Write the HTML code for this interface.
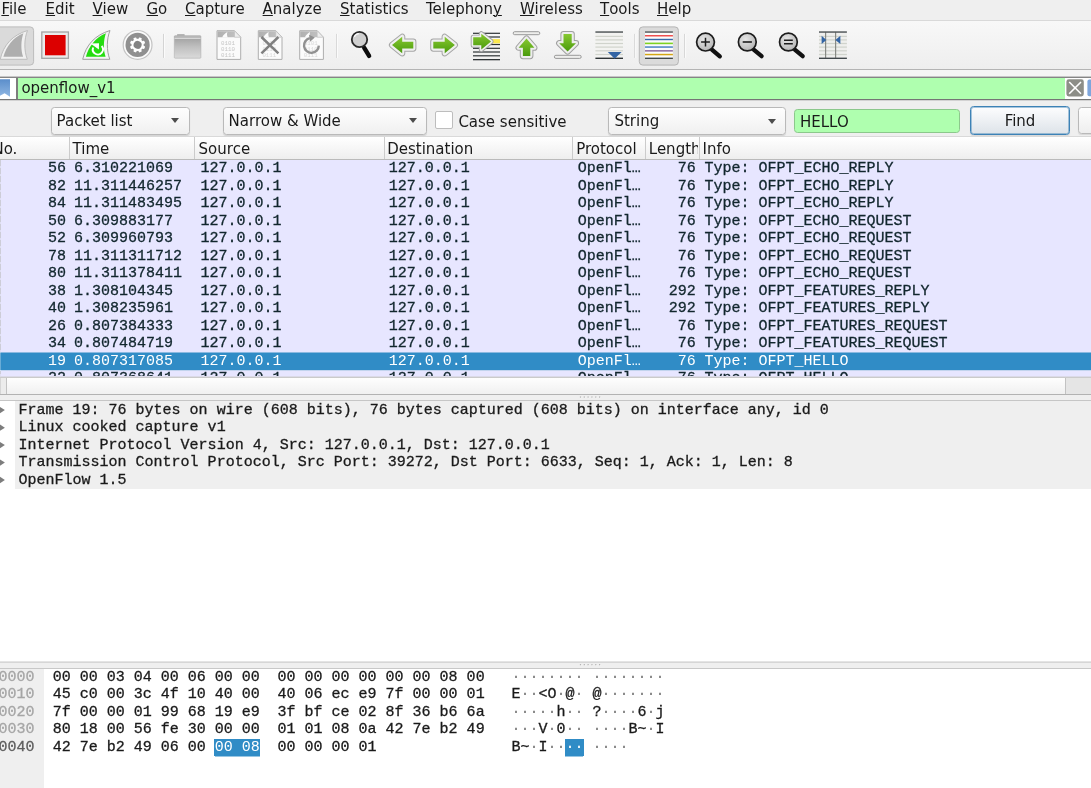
<!DOCTYPE html>
<html lang="en"><head><meta charset="utf-8"><title>Wireshark</title>
<style>
html,body{margin:0;padding:0}
body{width:1091px;height:788px;overflow:hidden;position:relative;background:#fff;
 font-family:"DejaVu Sans","Liberation Sans",sans-serif;font-size:15px;color:#1a1a1a}
.abs{position:absolute}
.r,.d,.h{-webkit-text-stroke:0.3px currentColor}
#menubar{position:absolute;left:0;top:0;width:1091px;height:19.6px;background:#efefef}
#menubar span{position:absolute;top:0;line-height:18px;white-space:nowrap}
#menubar u{text-decoration:underline;text-underline-offset:1.2px;text-decoration-thickness:1.3px}
#toolbar{position:absolute;left:0;top:19.6px;width:1091px;height:50.3px;background:linear-gradient(#f8f8f8,#eeeeee);border-top:1px solid #d9d9d9;border-bottom:1px solid #b4b4b4;box-sizing:border-box}
#tbsvg{position:absolute;left:0;top:0}
#gap1{position:absolute;left:0;top:70px;width:1091px;height:6px;background:#f5f5f5}
#filter{position:absolute;left:0;top:76px;width:1091px;height:25px;background:linear-gradient(#c6c6c6 0 1px,#858585 1px 2px,#afffaf 2px 23px,#757575 23px 24px,#d2d2d2 24px 25px)}
#filter .bm{position:absolute;left:0;top:2px;width:16px;height:21px;background:#fff;border-right:2px solid;border-right-color:#7d7d7d}
#filter .txt{position:absolute;left:21.4px;top:2px;line-height:21.8px;white-space:nowrap}
#filter .fr{position:absolute;left:1065px;top:2px;width:26px;height:21px;background:#fff}
#search{position:absolute;left:0;top:101px;width:1091px;height:36px;background:#efefef}
.combo{position:absolute;box-sizing:border-box;border:1px solid #b9b9b9;border-radius:3.5px;background:linear-gradient(#fefefe,#f0f0f0);box-shadow:0 1px 1px rgba(0,0,0,.12)}
.combo span{position:absolute;left:5px;top:0;white-space:nowrap}
.combo i{position:absolute;width:0;height:0;border-left:4.8px solid transparent;border-right:4.8px solid transparent;border-top:5.2px solid #4d4d4d}
.chk{position:absolute;left:435px;top:10.4px;width:17.6px;height:17.4px;box-sizing:border-box;border:1px solid #bdbdbd;border-radius:2px;background:#fff}
.lbl{position:absolute;white-space:nowrap}
.inp{position:absolute;left:794px;top:8px;width:166px;height:24px;box-sizing:border-box;border:1px solid #8cc88c;border-radius:3.5px;background:#afffaf}
.inp span{position:absolute;left:5px;top:0;line-height:24.8px}
.btn{position:absolute;box-sizing:border-box;border:1px solid #b9b9b9;border-radius:3.5px;background:linear-gradient(#fefefe,#eeeeee);box-shadow:0 1px 1px rgba(0,0,0,.10)}
.btn.focus{border:1px solid #3d82b6;background:linear-gradient(#fdfdfe,#dde3e9);box-shadow:inset 0 0 0 1px rgba(61,130,182,.45),0 1px 1px rgba(0,0,0,.10)}
.btn span{position:absolute;left:0;right:0;top:0;text-align:center;line-height:29.2px}
#hdr{position:absolute;left:0;top:136px;width:1091px;height:24px;box-sizing:border-box;background:linear-gradient(#ffffff,#eeeeee);border-top:1px solid #d9d9d9;border-bottom:1px solid #bababa}
#hdr span{position:absolute;top:0;line-height:24.2px;height:22px;white-space:nowrap}
#hdr i{position:absolute;top:0;width:1px;height:22px;background:#cbcbcb}
#plist{position:absolute;left:0;top:160px;width:1091px;height:217px;background:#e7e6ff;overflow:hidden}
.r{position:absolute;left:0;width:1091px;height:17px;color:#12272e;font-family:"Liberation Mono",monospace;font-size:15px;line-height:17px;white-space:pre}
.r.sel{color:#fff;-webkit-text-stroke:0}
#rel{position:absolute;left:0;top:160px;width:1px;height:217px;background:repeating-linear-gradient(#cdcdd8 0 6px,rgba(205,205,216,.3) 6px 8px)}
#selbg{position:absolute;left:0;top:352px;width:1091px;height:19px;background:linear-gradient(#8bb9e0 0 1px,#308cc6 1px 18px,#c2d4ee 18px 19px);box-shadow:inset 1px 0 0 rgba(255,255,255,.28)}
.r .c{position:absolute;top:0}
.no{right:1025px}.tm{left:74px}.src{left:200.4px}.dst{left:388.8px}.pr{left:577.8px}.ln{right:395.3px}.inf{left:704.5px}
#rows{position:absolute;left:0;top:-160px}
#hscroll{position:absolute;left:0;top:376px;width:1091px;height:19px;background:linear-gradient(#dbdae8 0 1px,#cbcbcb 1px 2px,#fefefe 2px,#f0f0f0 18px,#b2b2b2 18px 19px)}
#hscroll .l{position:absolute;left:0;top:2px;width:6px;height:16px;background:linear-gradient(90deg,#d6d6d6 0 1px,#ececec 1px);border-right:1px solid #c2c2c2}
#hscroll .rr{position:absolute;left:1065px;top:2px;width:26px;height:16px;background:#e5e5e5;border-left:1px solid #c2c2c2;box-sizing:border-box}
#split1{position:absolute;left:0;top:395px;width:1091px;height:5px;background:#efefef}
#det{position:absolute;left:0;top:400px;width:1091px;height:262px;background:#fff;border-top:1px solid #c6c6c6;box-sizing:border-box}
.d{position:absolute;left:0;width:1091px;height:17px;font-family:"Liberation Mono",monospace;font-size:15px;line-height:17px;white-space:pre;color:#1a1a1a}
.d span{position:absolute;left:18.6px;top:0}
#detbg{position:absolute;left:15px;top:401px;width:1076px;height:88px;background:#efefef}
#split2{position:absolute;left:0;top:661px;width:1091px;height:8px;background:linear-gradient(#e4e4e4 0 1px,#d6d6d6 1px 2px,#efefef 2px 7px,#c8c8c8 7px 8px)}
#hexp{position:absolute;left:0;top:669px;width:1091px;height:119px;background:#fff}
#hexoff{position:absolute;left:0;top:669px;width:43.6px;height:119px;background:#efefef}
.h{position:absolute;left:0;width:1091px;height:17px;font-family:"Liberation Mono",monospace;font-size:15px;line-height:17px;white-space:pre;color:#1a1a1a}
.h span{position:absolute;top:0}
.h .off{left:-1.5px;color:#a6a6a6}
.h .off.cur{color:#5e5e5e}
.h .hx1{left:52.8px}.h .hx2{left:277.6px}.h .as1{left:511.4px}.h .as2{left:592.4px}
.h b{font-weight:normal;background:#308cc6;color:#fff;-webkit-text-stroke:0;box-shadow:-1px 0 0 #308cc6,0 0.5px 0 #308cc6}
.h .as1 b{box-shadow:1px 0 0 #308cc6,0 0.5px 0 #308cc6}
.h i{font-style:normal;color:#7a7a7a;-webkit-text-stroke:0}
.h b i{color:#fff}
.dots{position:absolute;font-size:0}
#app{position:absolute;left:0;top:0;width:1091px;height:788px;overflow:hidden;will-change:transform}
</style></head><body><div id="app">
<div id="menubar">
<span style="left:1.4px"><u>F</u>ile</span><span style="left:45.6px"><u>E</u>dit</span><span style="left:92.6px"><u>V</u>iew</span><span style="left:146.4px"><u>G</u>o</span><span style="left:185px"><u>C</u>apture</span><span style="left:262.6px"><u>A</u>nalyze</span><span style="left:340px"><u>S</u>tatistics</span><span style="left:426px">Telephon<u>y</u></span><span style="left:520px"><u>W</u>ireless</span><span style="left:600px;font-kerning:none"><u>T</u>ools</span><span style="left:657px"><u>H</u>elp</span>
</div>
<div id="toolbar">
<svg id="tbsvg" width="1091" height="48" viewBox="0 21.1 1091 48">
<defs>
<linearGradient id="gg" x1="0" y1="0" x2="0" y2="1"><stop offset="0" stop-color="#86c830"/><stop offset="1" stop-color="#4a9a0c"/></linearGradient>
<linearGradient id="gh" x1="0" y1="0" x2="1" y2="0"><stop offset="0" stop-color="#7ec42a"/><stop offset="1" stop-color="#56a412"/></linearGradient>
<linearGradient id="fold" x1="0" y1="0" x2="0" y2="1"><stop offset="0" stop-color="#9c9c9c"/><stop offset="0.5" stop-color="#c0c0c0"/><stop offset="1" stop-color="#dadada"/></linearGradient>
<linearGradient id="docg" x1="0" y1="0" x2="1" y2="1"><stop offset="0" stop-color="#b8b8b8"/><stop offset="0.3" stop-color="#f1f1f1"/><stop offset="1" stop-color="#f6f6f6"/></linearGradient>
<linearGradient id="band" x1="0" y1="0" x2="1" y2="0"><stop offset="0" stop-color="#b0b0b0"/><stop offset="1" stop-color="#c4c4c4"/></linearGradient>
<radialGradient id="lens" cx="0.4" cy="0.35" r="0.7"><stop offset="0" stop-color="#e6e6e6"/><stop offset="1" stop-color="#b4b4b4"/></radialGradient>
<g id="doc"><path d="M0.5 0.5 H18 L24.2 7 V29.2 H0.5 Z" fill="#fbfbfb" stroke="#aeaeae" stroke-width="1"/><path d="M1 1 H17.8 L23.6 7 H1 Z" fill="url(#band)"/><path d="M5.6 7.2 C7 4.6 8.6 2.9 10.9 1.8 C10.3 3.8 10.4 5.6 11.3 7.2 Z" fill="#fbfbfb"/><path d="M18 0.6 V7 H24.1 Z" fill="#ededed" stroke="#bdbdbd" stroke-width="0.6" stroke-linejoin="round"/></g>
<g id="mag"><line x1="6.4" y1="7.6" x2="14.3" y2="14.2" stroke="#111" stroke-width="4.3" stroke-linecap="round"/><circle cx="0" cy="0" r="8.9" fill="url(#lens)" stroke="#1c1c1c" stroke-width="1.7"/></g>
</defs>
<!-- shark (pressed) -->
<rect x="-6" y="27" width="39.6" height="38.2" rx="3.5" fill="#dadada" stroke="#bcbcbc" stroke-width="1"/>
<g transform="translate(-82.5 0)"><path d="M82.7 59.4 C86 45 95 35.2 110 30.6 C106.6 39 106.4 50.5 109.8 59.4 Z" fill="#f1f1f1" stroke="#bdbdbd" stroke-width="1" stroke-linejoin="miter"/>
<path d="M85.9 56.8 C88.8 46.5 95.5 37.6 105.9 33.3 C103.4 40.5 103.2 49.8 105.6 56.8 Z" fill="#aeaeae"/></g>
<!-- stop -->
<rect x="41.8" y="32.1" width="26.6" height="26.3" fill="#ebebeb" stroke="#a4a4a4" stroke-width="1.3"/>
<rect x="45" y="35.1" width="20.6" height="20.3" fill="#dc0000"/>
<!-- restart -->
<path d="M82.7 59.4 C86 45 95 35.2 110 30.6 C106.6 39 106.4 50.5 109.8 59.4 Z" fill="#f4f4f4" stroke="#9e9e9e" stroke-width="1" stroke-linejoin="miter"/>
<path d="M85.9 56.8 C88.8 46.5 95.5 37.6 105.9 33.3 C103.4 40.5 103.2 49.8 105.6 56.8 Z" fill="#24dc10"/>
<path d="M101.6 46.1 A5.05 5.05 0 1 1 93.2 47.6" fill="none" stroke="#fff" stroke-width="1.9"/>
<path d="M90.4 43.7 L99 43.4 L98.9 49.6 Z" fill="#fff"/>
<!-- options gear -->
<circle cx="137.6" cy="45" r="14.4" fill="#fbfbfb" stroke="#c4c4c4" stroke-width="1.2"/>
<circle cx="137.6" cy="45" r="12.1" fill="#909090"/>
<g transform="translate(137.6 45) rotate(22.5)" fill="#fff">
<circle r="6.1"/>
<rect x="-1.5" y="-7.7" width="3" height="15.4" rx="0.7"/><rect x="-1.5" y="-7.7" width="3" height="15.4" rx="0.7" transform="rotate(45)"/><rect x="-1.5" y="-7.7" width="3" height="15.4" rx="0.7" transform="rotate(90)"/><rect x="-1.5" y="-7.7" width="3" height="15.4" rx="0.7" transform="rotate(135)"/>
<circle r="4" fill="#838383"/>
</g>
<!-- sep -->
<rect x="163" y="34" width="1" height="24" fill="#d4d4d4"/><rect x="164" y="34" width="1" height="24" fill="#fbfbfb"/>
<!-- folder -->
<path d="M177 36 V34.6 Q177 34.1 177.6 34.1 H184 Q184.6 34.1 184.6 34.6 V36 Z" fill="#b5b5b5"/>
<rect x="174.3" y="35.9" width="26.6" height="22.4" rx="0.8" fill="url(#fold)" stroke="#b0b0b0" stroke-width="0.6"/>
<rect x="174.4" y="35.9" width="26.4" height="2.2" fill="#b6b6b6"/><rect x="174.6" y="38" width="26" height="0.9" fill="#e4e4e4"/>
<!-- docs -->
<g transform="translate(216.5 30.3)"><use href="#doc"/><g font-family="Liberation Mono, monospace" font-size="5.8" fill="#c6c6c6"><text x="4.6" y="14.6">0101</text><text x="4.6" y="20.5">0110</text><text x="4.6" y="26.6">0111</text></g></g>
<g transform="translate(257.8 30.3)"><use href="#doc"/><g font-family="Liberation Mono, monospace" font-size="5.8" fill="#d8d8d8"><text x="4.6" y="14.6">0101</text><text x="4.6" y="20.5">0110</text><text x="4.6" y="26.6">0111</text></g>
<path d="M3.6 6.8 L20.6 23.2 M20.6 6.8 L3.6 23.2" stroke="#808080" stroke-width="2.5" fill="none"/></g>
<g transform="translate(299.2 30.3)"><use href="#doc"/><g font-family="Liberation Mono, monospace" font-size="5.8" fill="#d8d8d8"><text x="4.6" y="14.6">0101</text><text x="4.6" y="20.5">0110</text><text x="4.6" y="26.6">0111</text></g>
<path d="M19.6 15.4 A7.4 7.4 0 1 1 10.6 8" fill="none" stroke="#919191" stroke-width="2.4"/><path d="M9.8 4.6 L15.6 7.4 L10.8 11.6 Z" fill="#919191"/></g>
<!-- sep -->
<rect x="336" y="34" width="1" height="24" fill="#d9d9d9"/><rect x="337" y="34" width="1" height="24" fill="#fbfbfb"/>
<!-- find -->
<g transform="translate(359.5 39.6)"><line x1="4.6" y1="8.2" x2="9.6" y2="16.4" stroke="#0c0c0c" stroke-width="4.4" stroke-linecap="round"/><circle r="7.7" fill="#d0d0d0" stroke="#2a2a2a" stroke-width="1.8"/><path d="M-5.2 -2.6 A5.8 5.8 0 0 1 -0.6 -5.8" stroke="#fafafa" stroke-width="1.2" fill="none"/></g>
<!-- back / fwd -->
<g stroke-linejoin="round">
<path id="la" d="M392 45.1 L402.2 36.9 V41.8 H413.3 V48.7 H402.2 V53.4 Z" fill="none" stroke="#a6a6a6" stroke-width="6.2"/>
<path d="M392 45.1 L402.2 36.9 V41.8 H413.3 V48.7 H402.2 V53.4 Z" fill="none" stroke="#efefef" stroke-width="4.2"/>
<path d="M392 45.1 L402.2 36.9 V41.8 H413.3 V48.7 H402.2 V53.4 Z" fill="url(#gg)"/>
<path d="M454.9 45.1 L444.7 36.9 V41.8 H433.3 V48.7 H444.7 V53.4 Z" fill="none" stroke="#a6a6a6" stroke-width="6.2"/>
<path d="M454.9 45.1 L444.7 36.9 V41.8 H433.3 V48.7 H444.7 V53.4 Z" fill="none" stroke="#efefef" stroke-width="4.2"/>
<path d="M454.9 45.1 L444.7 36.9 V41.8 H433.3 V48.7 H444.7 V53.4 Z" fill="url(#gg)"/>
</g>
<!-- goto -->
<g fill="#2e3436">
<rect x="473" y="32.8" width="27" height="1.2"/><rect x="473" y="36.5" width="27" height="1.2"/><rect x="473" y="44" width="27" height="1.2"/><rect x="473" y="47.8" width="27" height="1.2"/><rect x="473" y="51.5" width="27" height="1.2"/><rect x="473" y="55.3" width="27" height="1.2"/><rect x="473" y="59.1" width="27" height="1.3"/>
</g>
<rect x="491" y="39.2" width="9" height="4.2" fill="#fce94f"/>
<g stroke-linejoin="round">
<path d="M491.1 41.6 L481.3 33.8 V37.3 H473.2 V45.3 H481.3 V49.7 Z" fill="none" stroke="#a0a0a0" stroke-width="5"/>
<path d="M491.1 41.6 L481.3 33.8 V37.3 H473.2 V45.3 H481.3 V49.7 Z" fill="none" stroke="#efefef" stroke-width="3.2"/>
<path d="M491.1 41.6 L481.3 33.8 V37.3 H473.2 V45.3 H481.3 V49.7 Z" fill="url(#gg)"/>
</g>
<!-- top -->
<rect x="513.2" y="31.8" width="26.6" height="3" rx="1.5" fill="#eeeeec" stroke="#999" stroke-width="1"/>
<g stroke-linejoin="round">
<path d="M526.5 38.6 L518.6 47.8 H522.9 V56.2 H530.3 V47.8 H534.4 Z" fill="none" stroke="#a0a0a0" stroke-width="6.2"/>
<path d="M526.5 38.6 L518.6 47.8 H522.9 V56.2 H530.3 V47.8 H534.4 Z" fill="none" stroke="#ededed" stroke-width="4.2"/>
<path d="M526.5 38.6 L518.6 47.8 H522.9 V56.2 H530.3 V47.8 H534.4 Z" fill="url(#gg)"/>
</g>
<!-- bottom -->
<g stroke-linejoin="round">
<path d="M567.6 51.6 L559.2 43.3 H563.5 V34.2 H571.7 V43.3 H576 Z" fill="none" stroke="#a0a0a0" stroke-width="6.2"/>
<path d="M567.6 51.6 L559.2 43.3 H563.5 V34.2 H571.7 V43.3 H576 Z" fill="none" stroke="#ededed" stroke-width="4.2"/>
<path d="M567.6 51.6 L559.2 43.3 H563.5 V34.2 H571.7 V43.3 H576 Z" fill="url(#gg)"/>
</g>
<rect x="554.4" y="55.4" width="26.8" height="3.1" rx="1.5" fill="#eeeeec" stroke="#999" stroke-width="1"/>
<!-- autoscroll -->
<rect x="595.4" y="32.8" width="27.6" height="25" fill="#f3f3f1"/>
<g fill="#d0d3cc"><rect x="595.4" y="35.9" width="27.6" height="1.2"/><rect x="595.4" y="39.4" width="27.6" height="1.2"/><rect x="595.4" y="43" width="27.6" height="1.2"/><rect x="595.4" y="46.6" width="27.6" height="1.2"/><rect x="595.4" y="50.3" width="27.6" height="1.2"/><rect x="595.4" y="54" width="27.6" height="1.2"/></g>
<rect x="595.4" y="31.4" width="27.6" height="1.5" fill="#555a5c"/><rect x="595.4" y="57.7" width="27.6" height="1.4" fill="#2e3436"/>
<path d="M607.8 52.2 H621.6 L614.7 58.8 Z" fill="#3465a4"/>
<!-- sep -->
<rect x="634.2" y="34" width="1" height="24" fill="#d4d4d4"/><rect x="635.2" y="34" width="1" height="24" fill="#fbfbfb"/>
<!-- colorize (pressed) -->
<rect x="639.3" y="27" width="39.1" height="38.2" rx="3.5" fill="#dbdbdb" stroke="#b4b4b4" stroke-width="1"/>
<rect x="645" y="32" width="27.9" height="26.6" fill="#fbfbfb"/>
<rect x="645" y="31.4" width="27.9" height="1.5" fill="#5a5f62"/><rect x="645" y="35.1" width="27.9" height="1.5" fill="#ef4f4f"/><rect x="645" y="38.9" width="27.9" height="1.4" fill="#3767a8"/><rect x="645" y="42.7" width="27.9" height="1.6" fill="#7ed321"/><rect x="645" y="46.4" width="27.9" height="1.5" fill="#4a82c4"/><rect x="645" y="50.2" width="27.9" height="1.5" fill="#8b6aa0"/><rect x="645" y="53.9" width="27.9" height="1.5" fill="#d4a514"/><rect x="645" y="57.7" width="27.9" height="1.4" fill="#41484b"/>
<!-- sep -->
<rect x="684.1" y="34" width="1" height="24" fill="#d4d4d4"/><rect x="685.1" y="34" width="1" height="24" fill="#fbfbfb"/>
<!-- zoom -->
<g transform="translate(705.5 42.2)"><use href="#mag"/><path d="M-4.4 0 H4.4 M0 -4.4 V4.4" stroke="#1c1c1c" stroke-width="1.5"/></g>
<g transform="translate(747.3 42.1)"><use href="#mag"/><path d="M-4.6 0 H4.6" stroke="#1c1c1c" stroke-width="1.6"/></g>
<g transform="translate(788.4 42.1)"><use href="#mag"/><path d="M-4.4 -1.7 H4.4 M-4.4 1.7 H4.4" stroke="#1c1c1c" stroke-width="1.4"/></g>
<!-- resize cols -->
<rect x="819" y="32.8" width="27.9" height="25" fill="#efefed"/>
<g fill="#d0d3cc"><rect x="819" y="35.9" width="27.9" height="1.2"/><rect x="819" y="39.4" width="27.9" height="1.2"/><rect x="819" y="43" width="27.9" height="1.2"/><rect x="819" y="46.6" width="27.9" height="1.2"/><rect x="819" y="50.3" width="27.9" height="1.2"/><rect x="819" y="54" width="27.9" height="1.2"/></g>
<rect x="825" y="32" width="1.2" height="26" fill="#888a85"/><rect x="835" y="32" width="1.2" height="26" fill="#888a85"/>
<rect x="819" y="31.4" width="27.9" height="1.5" fill="#555a5c"/><rect x="819" y="57.7" width="27.9" height="1.4" fill="#41484b"/>
<path d="M821.6 35.8 L826.4 40 L821.6 44.2 Z" fill="#3465a4"/><path d="M840.4 35.8 L835.4 40 L840.4 44.2 Z" fill="#3465a4"/>

</svg>
</div>
<div id="gap1"></div>
<div id="filter"><div class="bm"><svg width="12" height="21" viewBox="0 78 12 21" style="position:absolute;left:0;top:0"><defs><linearGradient id="bmg" x1="0" y1="0" x2="0" y2="1"><stop offset="0" stop-color="#5b8ecb"/><stop offset="1" stop-color="#8fb6e2"/></linearGradient></defs><path d="M-2 79.3 H10 V96.8 L4.6 93.2 L-2 96.8 Z" fill="url(#bmg)"/></svg></div><div class="txt">openflow_v1</div>
<div class="fr"><svg width="26" height="21" viewBox="1065 78 26 21" style="position:absolute;left:0;top:0"><rect x="1066.4" y="79.3" width="17.4" height="17.2" rx="2.4" fill="#8d8e88"/><path d="M1069.2 82 L1081 93.8 M1081 82 L1069.2 93.8" stroke="#fff" stroke-width="1.6"/><rect x="1087.4" y="79.4" width="8" height="16.8" rx="2" fill="#7ea6dc"/></svg></div></div>
<div id="search">
 <div class="combo" style="left:50.6px;top:6px;width:139px;height:27.6px"><span style="line-height:26.4px">Packet list</span><i style="left:119.2px;top:10.2px"></i></div>
 <div class="combo" style="left:222.6px;top:6px;width:204.4px;height:27.6px"><span style="line-height:26.4px">Narrow &amp; Wide</span><i style="left:185.6px;top:10.2px"></i></div>
 <div class="chk"></div><div class="lbl" style="left:458.4px;top:6px;line-height:30px">Case sensitive</div>
 <div class="combo" style="left:608.4px;top:6px;width:177.2px;height:27.6px"><span style="line-height:26.4px">String</span><i style="left:158.8px;top:10.6px"></i></div>
 <div class="inp"><span>HELLO</span></div>
 <div class="btn focus" style="left:970px;top:5.4px;width:100px;height:28.8px"><span>Find</span></div>
 <div class="btn" style="left:1078.4px;top:6.4px;width:100px;height:27px"></div>
</div>
<div id="hdr">
<span style="left:-7.6px">No.</span><i style="left:69px"></i><span style="left:72.6px">Time</span><i style="left:194.4px"></i><span style="left:198.6px">Source</span><i style="left:383.6px"></i><span style="left:387.2px">Destination</span><i style="left:572.4px"></i><span style="left:576.2px">Protocol</span><i style="left:645.2px"></i><span style="left:648.8px;width:48.8px;overflow:hidden">Length</span><i style="left:699.2px"></i><span style="left:702.6px">Info</span>
</div>
<div id="plist"><div id="rows"><div id="rel"></div><div id="selbg"></div>
<div class="r" style="top:160px"><span class="c no">56</span><span class="c tm">6.310221069</span><span class="c src">127.0.0.1</span><span class="c dst">127.0.0.1</span><span class="c pr">OpenFl…</span><span class="c ln">76</span><span class="c inf">Type: OFPT_ECHO_REPLY</span></div>
<div class="r" style="top:178px"><span class="c no">82</span><span class="c tm">11.311446257</span><span class="c src">127.0.0.1</span><span class="c dst">127.0.0.1</span><span class="c pr">OpenFl…</span><span class="c ln">76</span><span class="c inf">Type: OFPT_ECHO_REPLY</span></div>
<div class="r" style="top:195px"><span class="c no">84</span><span class="c tm">11.311483495</span><span class="c src">127.0.0.1</span><span class="c dst">127.0.0.1</span><span class="c pr">OpenFl…</span><span class="c ln">76</span><span class="c inf">Type: OFPT_ECHO_REPLY</span></div>
<div class="r" style="top:213px"><span class="c no">50</span><span class="c tm">6.309883177</span><span class="c src">127.0.0.1</span><span class="c dst">127.0.0.1</span><span class="c pr">OpenFl…</span><span class="c ln">76</span><span class="c inf">Type: OFPT_ECHO_REQUEST</span></div>
<div class="r" style="top:230px"><span class="c no">52</span><span class="c tm">6.309960793</span><span class="c src">127.0.0.1</span><span class="c dst">127.0.0.1</span><span class="c pr">OpenFl…</span><span class="c ln">76</span><span class="c inf">Type: OFPT_ECHO_REQUEST</span></div>
<div class="r" style="top:248px"><span class="c no">78</span><span class="c tm">11.311311712</span><span class="c src">127.0.0.1</span><span class="c dst">127.0.0.1</span><span class="c pr">OpenFl…</span><span class="c ln">76</span><span class="c inf">Type: OFPT_ECHO_REQUEST</span></div>
<div class="r" style="top:265px"><span class="c no">80</span><span class="c tm">11.311378411</span><span class="c src">127.0.0.1</span><span class="c dst">127.0.0.1</span><span class="c pr">OpenFl…</span><span class="c ln">76</span><span class="c inf">Type: OFPT_ECHO_REQUEST</span></div>
<div class="r" style="top:283px"><span class="c no">38</span><span class="c tm">1.308104345</span><span class="c src">127.0.0.1</span><span class="c dst">127.0.0.1</span><span class="c pr">OpenFl…</span><span class="c ln">292</span><span class="c inf">Type: OFPT_FEATURES_REPLY</span></div>
<div class="r" style="top:300px"><span class="c no">40</span><span class="c tm">1.308235961</span><span class="c src">127.0.0.1</span><span class="c dst">127.0.0.1</span><span class="c pr">OpenFl…</span><span class="c ln">292</span><span class="c inf">Type: OFPT_FEATURES_REPLY</span></div>
<div class="r" style="top:318px"><span class="c no">26</span><span class="c tm">0.807384333</span><span class="c src">127.0.0.1</span><span class="c dst">127.0.0.1</span><span class="c pr">OpenFl…</span><span class="c ln">76</span><span class="c inf">Type: OFPT_FEATURES_REQUEST</span></div>
<div class="r" style="top:335px"><span class="c no">34</span><span class="c tm">0.807484719</span><span class="c src">127.0.0.1</span><span class="c dst">127.0.0.1</span><span class="c pr">OpenFl…</span><span class="c ln">76</span><span class="c inf">Type: OFPT_FEATURES_REQUEST</span></div>
<div class="r sel" style="top:353px"><span class="c no">19</span><span class="c tm">0.807317085</span><span class="c src">127.0.0.1</span><span class="c dst">127.0.0.1</span><span class="c pr">OpenFl…</span><span class="c ln">76</span><span class="c inf">Type: OFPT_HELLO</span></div>
<div class="r" style="top:370px"><span class="c no">22</span><span class="c tm">0.807368641</span><span class="c src">127.0.0.1</span><span class="c dst">127.0.0.1</span><span class="c pr">OpenFl…</span><span class="c ln">76</span><span class="c inf">Type: OFPT_HELLO</span></div>
</div></div>
<div id="hscroll"><div class="l"></div><div class="rr"></div></div>
<div id="split1"></div><svg class="abs" style="left:578px;top:395px" width="26" height="5" viewBox="578 395 26 5"><rect x="580.30" y="396.90" width="1.2" height="1.3" fill="#fafafa"/><rect x="579.90" y="396.40" width="1.2" height="1.3" fill="#b4b4b4"/><rect x="584.12" y="396.90" width="1.2" height="1.3" fill="#fafafa"/><rect x="583.72" y="396.40" width="1.2" height="1.3" fill="#b4b4b4"/><rect x="587.94" y="396.90" width="1.2" height="1.3" fill="#fafafa"/><rect x="587.54" y="396.40" width="1.2" height="1.3" fill="#b4b4b4"/><rect x="591.76" y="396.90" width="1.2" height="1.3" fill="#fafafa"/><rect x="591.36" y="396.40" width="1.2" height="1.3" fill="#b4b4b4"/><rect x="595.58" y="396.90" width="1.2" height="1.3" fill="#fafafa"/><rect x="595.18" y="396.40" width="1.2" height="1.3" fill="#b4b4b4"/><rect x="599.40" y="396.90" width="1.2" height="1.3" fill="#fafafa"/><rect x="599.00" y="396.40" width="1.2" height="1.3" fill="#b4b4b4"/></svg>
<div id="det"></div><div id="detbg"></div>
<div class="d" style="top:402px"><span>Frame 19: 76 bytes on wire (608 bits), 76 bytes captured (608 bits) on interface any, id 0</span></div>
<div class="d" style="top:419px"><span>Linux cooked capture v1</span></div>
<div class="d" style="top:437px"><span>Internet Protocol Version 4, Src: 127.0.0.1, Dst: 127.0.0.1</span></div>
<div class="d" style="top:454px"><span>Transmission Control Protocol, Src Port: 39272, Dst Port: 6633, Seq: 1, Ack: 1, Len: 8</span></div>
<div class="d" style="top:472px"><span>OpenFlow 1.5</span></div>
<svg class="abs" style="left:0;top:401px" width="8" height="88" viewBox="0 401 8 88"><path d="M-2.4 405.4 L4.9 410.1 L-2.4 414.8 Z" fill="#7d7d7d"/><path d="M-2.4 423.0 L4.9 427.7 L-2.4 432.4 Z" fill="#7d7d7d"/><path d="M-2.4 440.4 L4.9 445.1 L-2.4 449.8 Z" fill="#7d7d7d"/><path d="M-2.4 457.9 L4.9 462.6 L-2.4 467.3 Z" fill="#7d7d7d"/><path d="M-2.4 475.3 L4.9 480.0 L-2.4 484.7 Z" fill="#7d7d7d"/></svg>
<div id="split2"></div><svg class="abs" style="left:578px;top:662px" width="26" height="5" viewBox="578 662 26 5"><rect x="580.30" y="664.50" width="1.2" height="1.3" fill="#fafafa"/><rect x="579.90" y="664.00" width="1.2" height="1.3" fill="#b4b4b4"/><rect x="584.12" y="664.50" width="1.2" height="1.3" fill="#fafafa"/><rect x="583.72" y="664.00" width="1.2" height="1.3" fill="#b4b4b4"/><rect x="587.94" y="664.50" width="1.2" height="1.3" fill="#fafafa"/><rect x="587.54" y="664.00" width="1.2" height="1.3" fill="#b4b4b4"/><rect x="591.76" y="664.50" width="1.2" height="1.3" fill="#fafafa"/><rect x="591.36" y="664.00" width="1.2" height="1.3" fill="#b4b4b4"/><rect x="595.58" y="664.50" width="1.2" height="1.3" fill="#fafafa"/><rect x="595.18" y="664.00" width="1.2" height="1.3" fill="#b4b4b4"/><rect x="599.40" y="664.50" width="1.2" height="1.3" fill="#fafafa"/><rect x="599.00" y="664.00" width="1.2" height="1.3" fill="#b4b4b4"/></svg>
<div id="hexp"></div><div id="hexoff"></div>
<div class="h" style="top:669px"><span class="off">0000</span><span class="hx1">00 00 03 04 00 06 00 00</span><span class="hx2">00 00 00 00 00 00 08 00</span><span class="as1"><i>········</i></span><span class="as2"><i>········</i></span></div>
<div class="h" style="top:686px"><span class="off">0010</span><span class="hx1">45 c0 00 3c 4f 10 40 00</span><span class="hx2">40 06 ec e9 7f 00 00 01</span><span class="as1">E<i>··</i>&lt;O<i>·</i>@<i>·</i></span><span class="as2">@<i>·······</i></span></div>
<div class="h" style="top:704px"><span class="off">0020</span><span class="hx1">7f 00 00 01 99 68 19 e9</span><span class="hx2">3f bf ce 02 8f 36 b6 6a</span><span class="as1"><i>·····</i>h<i>··</i></span><span class="as2">?<i>····</i>6<i>·</i>j</span></div>
<div class="h" style="top:721px"><span class="off">0030</span><span class="hx1">80 18 00 56 fe 30 00 00</span><span class="hx2">01 01 08 0a 42 7e b2 49</span><span class="as1"><i>···</i>V<i>·</i>0<i>··</i></span><span class="as2"><i>····</i>B~<i>·</i>I</span></div>
<div class="h" style="top:739px"><span class="off cur">0040</span><span class="hx1">42 7e b2 49 06 00 <b>00 08</b></span><span class="hx2">00 00 00 01</span><span class="as1">B~<i>·</i>I<i>··</i><b><i>··</i></b></span><span class="as2"><i>····</i></span></div>
</div></body></html>
